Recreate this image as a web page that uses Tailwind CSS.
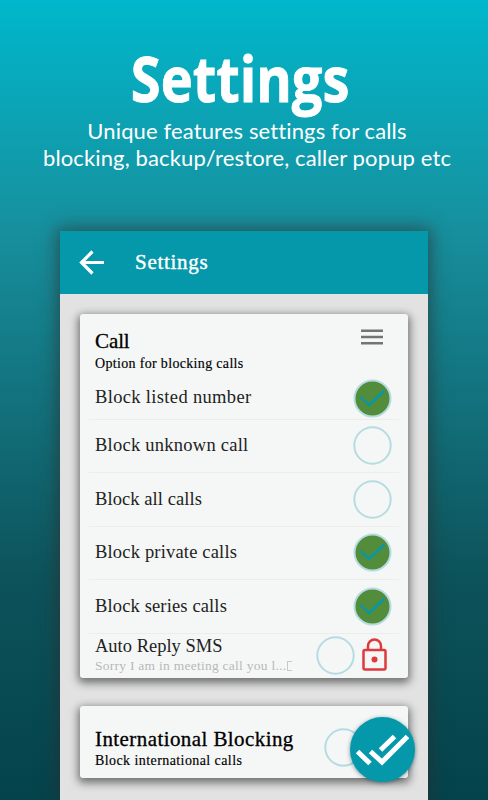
<!DOCTYPE html>
<html lang="en">
<head>
    <meta charset="UTF-8">
    <meta name="viewport" content="width=device-width, initial-scale=1.0">
    <title>Settings</title>
    <script src="https://cdn.jsdelivr.net/npm/@tailwindcss/browser@4"></script>
</head>
<body class="h-[800px] w-[488px] overflow-hidden bg-[linear-gradient(to_bottom,#00b7cb_0%,#178f9d_29%,#0d535b_72%,#04434b_100%)]">
    <div class="flex h-full flex-col items-center">
        <!-- Heading -->
        <header class="flex h-[231px] w-full shrink-0 flex-col items-center pt-[36px] text-white">
            <h1 class="mr-[8px] h-[81px] origin-center scale-x-[0.86] font-['Open_Sans'] text-[63px] leading-[84px] font-bold [-webkit-text-stroke:0.8px_white]">Settings</h1>
            <p class="pl-[6px] text-center font-['Lato'] text-[22px] leading-[27px] tracking-[0.13px] whitespace-nowrap">Unique features settings for calls<br>blocking, backup/restore, caller popup etc</p>
        </header>

        <!-- Phone screen -->
        <div class="w-[368px] grow bg-[#e2e2e2] font-['Liberation_Serif'] text-[#222] shadow-[0_0_16px_3px_rgba(45,45,45,0.6)]">
            <nav class="flex h-[63px] items-center bg-[#0598aa] pl-[19px] text-white">
                <svg class="h-[25px] w-[26px]" viewBox="0 0 26 25" fill="none" stroke="currentColor" stroke-width="3.2">
                    <path d="M25 12.5H3M13.5 1.5L2.5 12.5L13.5 23.5"/>
                </svg>
                <span class="ml-[30px] text-[21px] tracking-[0.7px] [-webkit-text-stroke:0.4px_white]">Settings</span>
            </nav>

            <main class="flex flex-col gap-7 px-5 pt-5">
                <!-- Call -->
                <section class="flex h-[364px] flex-col rounded-[3px] bg-[#f5f7f6] px-[9px] shadow-[0_3px_9px_2px_rgba(0,0,0,0.5)]">
                    <div class="flex h-[64px] shrink-0 justify-between pr-[16px] pl-[6px]">
                        <div class="pt-[15px] text-black">
                            <h2 class="text-[21px] leading-[25px] tracking-[-0.1px] [-webkit-text-stroke:0.3px_black]">Call</h2>
                            <p class="text-[14px] leading-5 tracking-[0.33px] [-webkit-text-stroke:0.15px_black]">Option for blocking calls</p>
                        </div>
                        <svg class="mt-[15px] h-4 w-[22px]" viewBox="0 0 22 16" fill="#747474">
                            <path d="M0 .5h22v2.5H0zM0 6.8h22v2.5H0zM0 13h22v2.5H0z"/>
                        </svg>
                    </div>
                    <div class="flex h-[41.5px] shrink-0 items-center justify-between border-b border-[#ececec] pr-[7px] pl-[6px]">
                        <span class="text-[18.5px] tracking-[0.34px]">Block listed number</span>
                        <svg class="size-[39px]" viewBox="0 0 39 39" fill="none">
                            <circle cx="19.5" cy="19.5" r="18" fill="#538c3a" stroke="#b5dce0" stroke-width="2"/>
                            <path d="M7.5 18l8.5 8L31.5 11.5" stroke="#0598aa" stroke-width="2.4"/>
                        </svg>
                    </div>
                    <div class="flex h-[53.5px] shrink-0 items-center justify-between border-b border-[#ececec] pr-[7px] pl-[6px]">
                        <span class="pt-px text-[18.5px] tracking-[0.25px]">Block unknown call</span>
                        <svg class="size-[39px]" viewBox="0 0 39 39" fill="none">
                            <circle cx="19.5" cy="19.5" r="18.2" stroke="#b5dce0" stroke-width="2"/>
                        </svg>
                    </div>
                    <div class="flex h-[53.5px] shrink-0 items-center justify-between border-b border-[#ececec] pr-[7px] pl-[6px]">
                        <span class="pt-px text-[18.5px] tracking-[0.08px]">Block all calls</span>
                        <svg class="size-[39px]" viewBox="0 0 39 39" fill="none">
                            <circle cx="19.5" cy="19.5" r="18.2" stroke="#b5dce0" stroke-width="2"/>
                        </svg>
                    </div>
                    <div class="flex h-[53.5px] shrink-0 items-center justify-between border-b border-[#ececec] pr-[7px] pl-[6px]">
                        <span class="pt-px text-[18.5px] tracking-[0.18px]">Block private calls</span>
                        <svg class="size-[39px]" viewBox="0 0 39 39" fill="none">
                            <circle cx="19.5" cy="19.5" r="18" fill="#538c3a" stroke="#b5dce0" stroke-width="2"/>
                            <path d="M7.5 18l8.5 8L31.5 11.5" stroke="#0598aa" stroke-width="2.4"/>
                        </svg>
                    </div>
                    <div class="flex h-[53.5px] shrink-0 items-center justify-between border-b border-[#ececec] pr-[7px] pl-[6px]">
                        <span class="pt-px text-[18.5px] tracking-[0.14px]">Block series calls</span>
                        <svg class="size-[39px]" viewBox="0 0 39 39" fill="none">
                            <circle cx="19.5" cy="19.5" r="18" fill="#538c3a" stroke="#b5dce0" stroke-width="2"/>
                            <path d="M7.5 18l8.5 8L31.5 11.5" stroke="#0598aa" stroke-width="2.4"/>
                        </svg>
                    </div>
                    <div class="flex h-[44px] shrink-0 pl-[6px]">
                        <div class="w-[221px] pt-[2px] whitespace-nowrap">
                            <p class="text-[18.5px] leading-[21px]">Auto Reply SMS</p>
                            <p class="flex items-center text-[13.5px] leading-[18px] tracking-[0.26px] text-[#b8b8b8]">Sorry I am in meeting call you l...<span class="ml-px h-[10px] w-[5px] border border-r-0 border-[#c8c8c8]"></span></p>
                        </div>
                        <svg class="mt-[2px] size-[39px]" viewBox="0 0 39 39" fill="none">
                            <circle cx="19.5" cy="19.5" r="18.2" stroke="#b5dce0" stroke-width="2"/>
                        </svg>
                        <svg class="mt-[4px] ml-[7px] h-[33px] w-[25px]" viewBox="0 0 25 33" fill="none" stroke="#de3a3e" stroke-width="2.5">
                            <rect x="1.5" y="12" width="22" height="19.5" rx="1.5"/>
                            <path d="M6 12V8a6.5 6.5 0 0 1 13 0v4"/>
                            <circle cx="12.5" cy="21.5" r="3" fill="#de3a3e" stroke="none"/>
                        </svg>
                    </div>
                </section>

                <!-- International Blocking -->
                <section class="relative flex h-[72px] rounded-[3px] bg-[#f5f7f6] pl-[15px] shadow-[0_3px_9px_2px_rgba(0,0,0,0.5)]">
                    <div class="w-[229px] pt-[21px] whitespace-nowrap text-black">
                        <h2 class="text-[21px] leading-[24px] tracking-[0.42px] [-webkit-text-stroke:0.3px_black]">International Blocking</h2>
                        <p class="text-[14px] leading-[20px] tracking-[0.42px] [-webkit-text-stroke:0.15px_black]">Block international calls</p>
                    </div>
                    <svg class="mt-[22px] size-[39px]" viewBox="0 0 39 39" fill="none">
                        <circle cx="19.5" cy="19.5" r="18.2" stroke="#b5dce0" stroke-width="2"/>
                    </svg>
                    <button class="absolute top-[11px] right-[-7px] size-[65px] rounded-full bg-[#0598aa] shadow-[0_1px_4px_rgba(0,60,70,0.5)]">
                        <svg class="size-full" viewBox="0 0 65 65" fill="none" stroke="white" stroke-width="5">
                            <path d="M7.5 34.5L20 46.5M20.5 34.5L32 45L57.5 19.5M30.5 33L44.5 19.5"/>
                        </svg>
                    </button>
                </section>
            </main>
        </div>
    </div>
</body>
</html>
